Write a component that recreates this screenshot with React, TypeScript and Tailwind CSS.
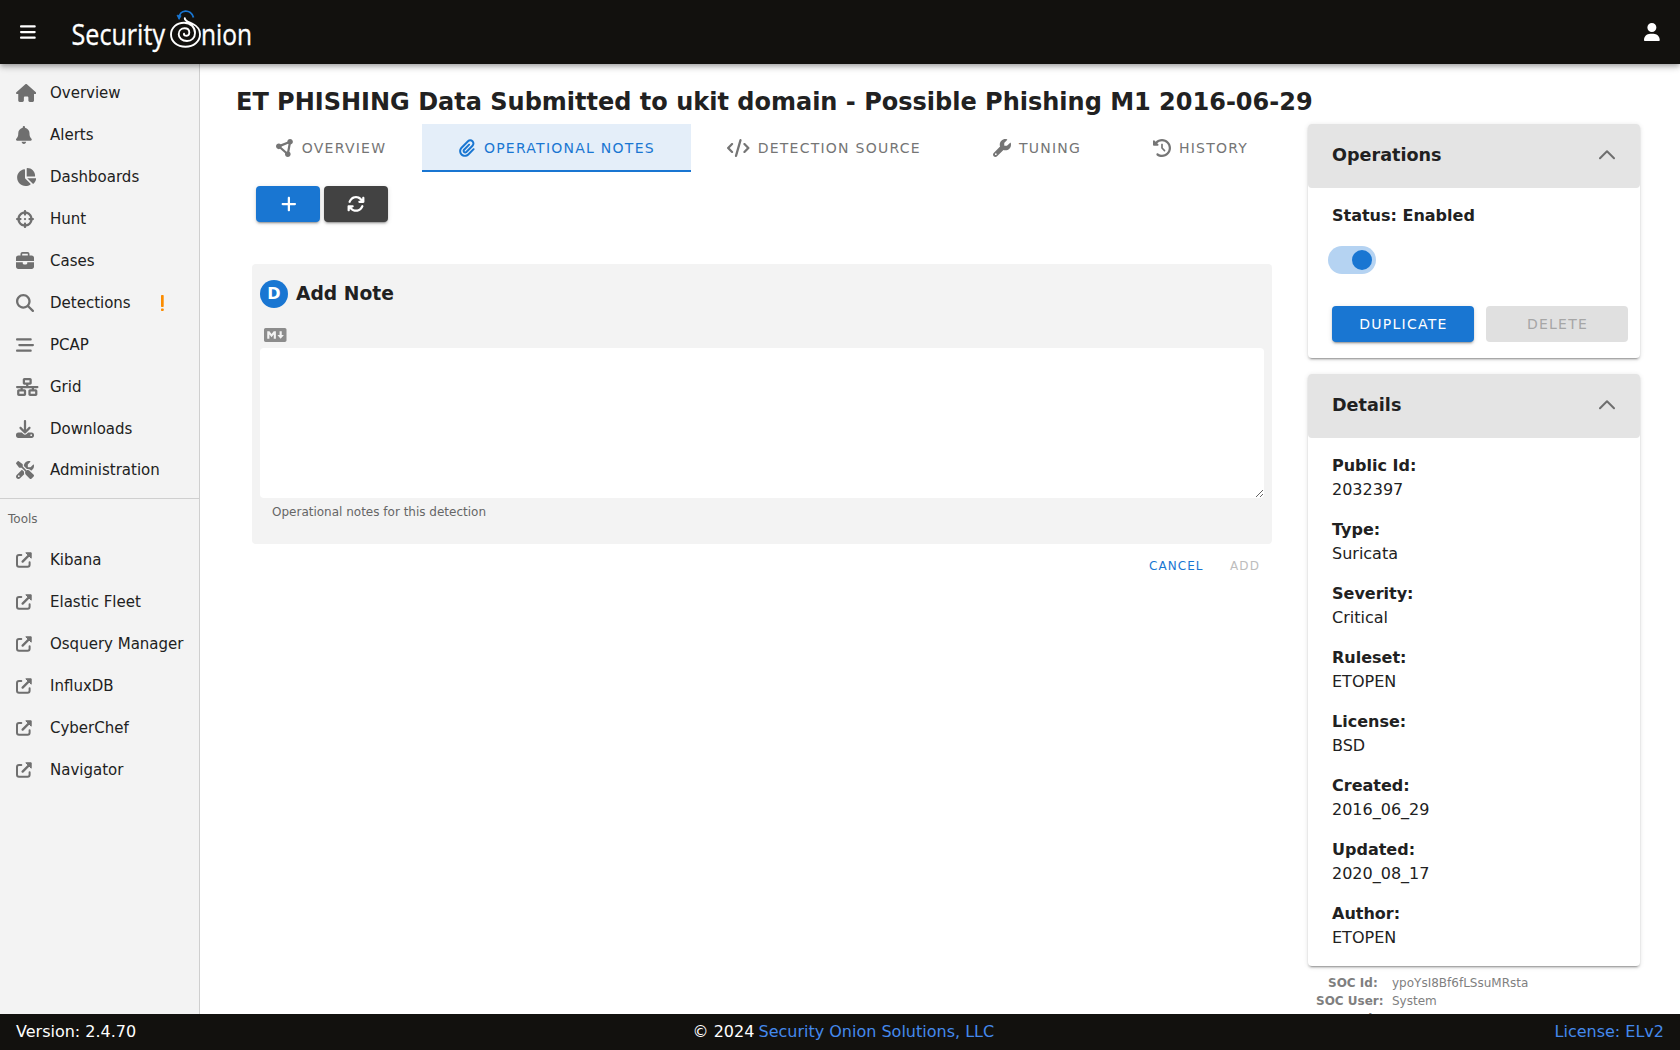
import React from "react";
import type { IconType } from "react-icons";
import {
  FaArrowsRotate,
  FaBars,
  FaBarsStaggered,
  FaBell,
  FaBriefcase,
  FaChartPie,
  FaCircleNodes,
  FaClockRotateLeft,
  FaCode,
  FaCrosshairs,
  FaDownload,
  FaHouse,
  FaMagnifyingGlass,
  FaMarkdown,
  FaNetworkWired,
  FaPaperclip,
  FaPlus,
  FaScrewdriverWrench,
  FaUser,
  FaWrench,
} from "react-icons/fa6";

type NavEntry = { label: string; icon: IconType; size: string; alert?: boolean };

const W448 = "h-[18px] w-[15.75px]";
const W512 = "h-[18px] w-[18px]";
const W576 = "h-[18px] w-[20.25px]";
const W640 = "h-[18px] w-[22.5px]";

const nav: NavEntry[] = [
  { label: "Overview", icon: FaHouse, size: W576 },
  { label: "Alerts", icon: FaBell, size: W448 },
  { label: "Dashboards", icon: FaChartPie, size: W576 },
  { label: "Hunt", icon: FaCrosshairs, size: W512 },
  { label: "Cases", icon: FaBriefcase, size: W512 },
  { label: "Detections", icon: FaMagnifyingGlass, size: W512, alert: true },
  { label: "PCAP", icon: FaBarsStaggered, size: W512 },
  { label: "Grid", icon: FaNetworkWired, size: W640 },
  { label: "Downloads", icon: FaDownload, size: W512 },
  { label: "Administration", icon: FaScrewdriverWrench, size: W512 },
];

const tools = ["Kibana", "Elastic Fleet", "Osquery Manager", "InfluxDB", "CyberChef", "Navigator"];

const tabs = [
  { label: "Overview", icon: FaCircleNodes, size: W512, width: "w-[182px]" },
  { label: "Operational Notes", icon: FaPaperclip, size: `${W448} -ml-px mr-px`, width: "w-[269px] pl-[2px]", active: true },
  { label: "Detection Source", icon: FaCode, size: W640, width: "w-[266px]" },
  { label: "Tuning", icon: FaWrench, size: W512, width: "w-[160px]" },
  { label: "History", icon: FaClockRotateLeft, size: W512, width: "w-[167px]" },
];

const details = [
  ["Public Id:", "2032397"],
  ["Type:", "Suricata"],
  ["Severity:", "Critical"],
  ["Ruleset:", "ETOPEN"],
  ["License:", "BSD"],
  ["Created:", "2016_06_29"],
  ["Updated:", "2020_08_17"],
  ["Author:", "ETOPEN"],
];

const raised =
  "shadow-[0_3px_1px_-2px_rgba(0,0,0,0.2),0_2px_2px_0_rgba(0,0,0,0.14),0_1px_5px_0_rgba(0,0,0,0.12)]";

function Logo() {
  return (
    <svg className="ml-[34px] h-[60px] w-[190px] overflow-visible" viewBox="70 2 190 60" fill="none">
      <g fill="#fff" stroke="#fff" strokeWidth=".35" fontFamily='"Open Sans", "Noto Sans", sans-serif' fontSize="30">
        <text x="71.500" y="44.700" textLength="93.500" lengthAdjust="spacingAndGlyphs">Security</text>
        <text x="201" y="44.700" textLength="51" lengthAdjust="spacingAndGlyphs">nion</text>
      </g>
      <path
        d="M184.800 18.300C184.800 21.500 189 21.800 193 24C197.500 26.300 200 30 200 34.300C200 41.500 193.500 46.700 185.500 46.700C177 46.700 171 41.500 171 34.500C171 28 176.500 22.700 184 22.700C191 22.700 195 27.500 195 33C195 38 191.500 41 187 41C182 41 178.700 38 178.700 34.300C178.700 30.500 181.300 28.300 184.500 28.300C187.500 28.300 189.300 30.200 189.300 32.500C189.300 35 187.500 36.200 185.500 35.700C184.300 35.400 183.800 34.600 184 33.600"
        stroke="#fff"
        strokeWidth="1.900"
        strokeLinecap="round"
      />
      <path d="M179 18.500c0-9.500 12-10 14.500-1" stroke="#1976d2" strokeWidth="1.800" />
      <path d="M177 15.200l2.100 4.200 2-3.600z" fill="#1976d2" stroke="#1976d2" strokeWidth=".8" />
    </svg>
  );
}

function ExternalLink() {
  return (
    <svg className="size-4" viewBox="0 0 16 16" fill="none" stroke="currentColor" strokeWidth="2" strokeLinecap="round">
      <path d="M5.300 3H3a2 2 0 0 0-2 2v7.700a2 2 0 0 0 2 2h8.600a2 2 0 0 0 2-2V10.200" />
      <path d="M6.600 9.600l6-6" strokeWidth="2.300" />
      <path d="M10.200.8h5v5z" fill="currentColor" strokeWidth="1" strokeLinejoin="round" />
    </svg>
  );
}

function ChevronUp() {
  return (
    <svg className="mr-px mb-[2px] h-[10px] w-4" viewBox="0 0 16 10" fill="none" stroke="#6f6f6f" strokeWidth="2" strokeLinecap="round" strokeLinejoin="round">
      <path d="M1 8.300L8 1.300l7 7" />
    </svg>
  );
}

function Panel({ title, children }: { title: string; children: React.ReactNode }) {
  return (
    <section className={`rounded bg-white ${raised}`}>
      <div className="flex h-16 items-center justify-between rounded bg-[#e4e4e4] px-6">
        <h3 className="pb-[2px] text-[17.6px] font-bold">{title}</h3>
        <ChevronUp />
      </div>
      {children}
    </section>
  );
}

export default function App() {
  return (
    <div className='flex h-[1050px] w-[1680px] flex-col overflow-hidden bg-white font-["DejaVu_Sans",sans-serif] text-[#212121]'>
      <header className="relative z-10 flex h-16 shrink-0 items-center bg-[#12110e] pr-5 pl-5 text-white shadow-[0_2px_4px_-1px_rgba(0,0,0,0.2),0_4px_5px_0_rgba(0,0,0,0.14),0_1px_10px_0_rgba(0,0,0,0.12)]">
        <FaBars className={W448} />
        <Logo />
        <FaUser className={`${W448} ml-auto`} />
      </header>

      <div className="flex min-h-0 flex-1">
        <nav className="w-[200px] shrink-0 border-r border-[#cfcfcf] bg-[#f3f3f3] text-[15px]">
          <div className="box-border h-[435px] border-b border-[#cfcfcf] pt-2">
            {nav.map(({ label, icon: Icon, size, alert }, i) => (
              <a key={label} className={`flex items-center pl-4 ${i === 9 ? "h-10" : "h-[42px]"}`}>
                <span className="flex w-[34px] text-[#6f6f6f]">
                  <Icon className={size} />
                </span>
                <span>{label}</span>
                {alert && (
                  <svg className="ml-[30px] h-4 w-[3px]" viewBox="0 0 3 16" fill="#fb8c00">
                    <rect width="2.700" height="12" rx=".7" />
                    <rect width="2.700" y="13.600" height="2.400" rx=".7" />
                  </svg>
                )}
              </a>
            ))}
          </div>
          <div className="flex h-10 items-center pl-2 text-[12px] text-[#666]">Tools</div>
          {tools.map((t) => (
            <a key={t} className="flex h-[42px] items-center pl-4">
              <span className="flex w-[34px] text-[#6f6f6f]">
                <ExternalLink />
              </span>
              <span className="whitespace-nowrap">{t}</span>
            </a>
          ))}
        </nav>

        <main className="flex min-w-0 flex-1 flex-col pt-5 pr-10 pl-9">
          <h2 className="h-10 text-2xl leading-[36px] font-bold whitespace-nowrap">
            ET PHISHING Data Submitted to ukit domain - Possible Phishing M1 2016-06-29
          </h2>
          <div className="flex min-h-0 flex-1 gap-6">
            <div className="w-[1048px] shrink-0 pl-1">
              <div className="flex h-12">
                {tabs.map(({ label, icon: Icon, size, width, active }) => (
                  <button
                    key={label}
                    className={`flex shrink-0 items-center justify-center gap-2 border-b-2 pt-[2px] text-sm tracking-[1.25px] whitespace-nowrap uppercase ${width} ${
                      active ? "border-[#1976d2] bg-[#e4eef9] text-[#1976d2]" : "border-transparent text-[#757575]"
                    }`}
                  >
                    <Icon className={size} />
                    {label}
                  </button>
                ))}
              </div>
              <div className="flex gap-1 px-4 pt-[14px] text-white">
                <button className={`flex h-9 w-16 items-center justify-center rounded bg-[#1976d2] pl-px ${raised}`}>
                  <FaPlus className={W448} />
                </button>
                <button className={`flex h-9 w-16 items-center justify-center rounded bg-[#424242] ${raised}`}>
                  <FaArrowsRotate className={W512} />
                </button>
              </div>
              <div className="mt-[42px] ml-3 h-[280px] w-[1020px] rounded bg-[#f3f3f3] px-2 pt-4">
                <div className="flex h-7 items-center gap-2">
                  <span className="flex size-7 items-center justify-center rounded-full bg-[#1976d2] text-base font-bold text-white">D</span>
                  <h3 className="text-[18.72px] leading-7 font-bold">Add Note</h3>
                </div>
                <FaMarkdown className={`${W640} mt-[18px] ml-1 text-[#8c8c8c]`} />
                <textarea className="mt-1 block h-[150px] w-[1004px] resize rounded bg-white" />
                <p className="mt-[5px] ml-3 text-xs leading-[18px] text-[#666]">Operational notes for this detection</p>
              </div>
              <div className="mr-3 flex h-11 items-center justify-end gap-[26.5px] pr-3 text-xs tracking-[1.07px]">
                <button className="text-[#1976d2]">CANCEL</button>
                <button className="text-[#bdbdbd]">ADD</button>
              </div>
            </div>

            <aside className="w-[332px] shrink-0">
              <Panel title="Operations">
                <div className="h-[170px] pt-4 pr-3 pl-6">
                  <p className="leading-6 font-bold">Status: Enabled</p>
                  <div className="mt-[18px] -ml-1 flex h-7 w-12 items-center justify-end rounded-full bg-[#b5d3f2] pr-1">
                    <span className="size-5 rounded-full bg-[#1976d2]" />
                  </div>
                  <div className="mt-8 flex gap-3 text-sm tracking-[1.25px]">
                    <button className={`h-9 w-[142px] rounded bg-[#1976d2] pl-px text-white ${raised}`}>DUPLICATE</button>
                    <button className="h-9 w-[142px] rounded bg-[#e0e0e0] pl-px text-[#a6a6a6]">DELETE</button>
                  </div>
                </div>
              </Panel>
              <div className="mt-4">
                <Panel title="Details">
                  <dl className="flex h-[528px] flex-col gap-4 pt-4 pl-6 leading-6">
                    {details.map(([k, v]) => (
                      <div key={k}>
                        <dt className="font-bold">{k}</dt>
                        <dd>{v}</dd>
                      </div>
                    ))}
                  </dl>
                </Panel>
              </div>
              <div className="grid grid-cols-[84px_1fr] pt-2 text-xs leading-[18px] text-[#7f7f7f]">
                <b className="pl-5">SOC Id:</b>
                <span>ypoYsI8Bf6fLSsuMRsta</span>
                <b className="pl-2">SOC User:</b>
                <span>System</span>
                <b className="pl-[11px]">Created:</b>
              </div>
            </aside>
          </div>
        </main>
      </div>

      <footer className="relative z-10 flex h-9 shrink-0 items-center justify-between bg-[#12110e] px-4 text-white">
        <span>Version: 2.4.70</span>
        <span className="mr-1 whitespace-nowrap">
          © 2024 <a className="-ml-px text-[#4489ec]">Security Onion Solutions, LLC</a>
        </span>
        <a className="text-[#4489ec]">License: ELv2</a>
      </footer>
    </div>
  );
}
